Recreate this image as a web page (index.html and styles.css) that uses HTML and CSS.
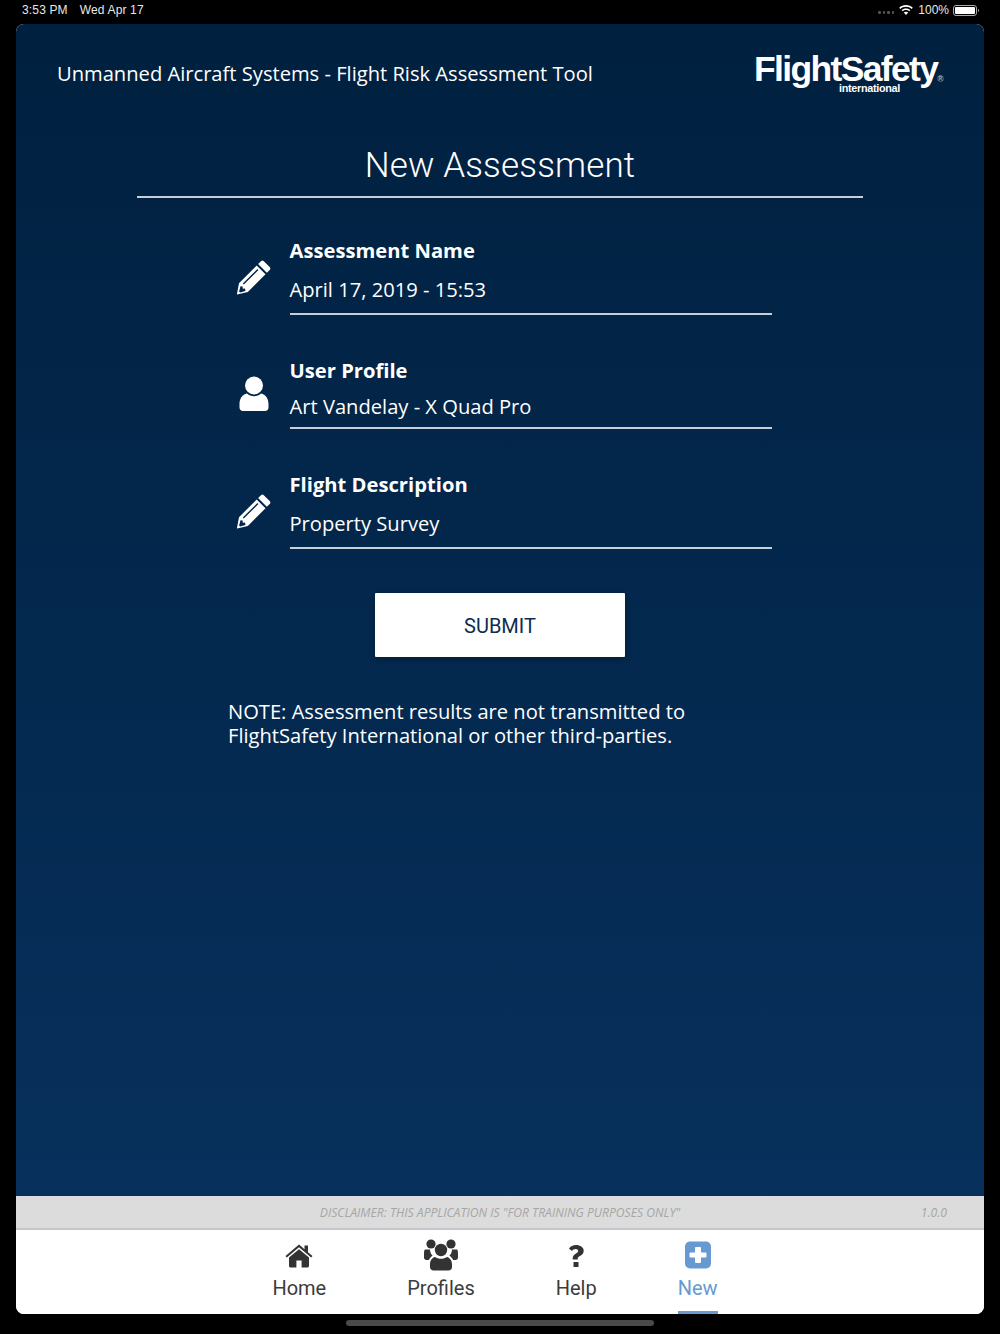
FILE: index.html
```html
<!DOCTYPE html>
<html lang="en">
<head>
<meta charset="utf-8">
<title>New Assessment</title>
<link rel="stylesheet" href="styles.css">
</head>
<body>
<div class="status">
  <div class="status-left"><span>3:53 PM</span><span>Wed Apr 17</span></div>
  <div class="status-right">
    <span class="dots"><i></i><i></i><i></i><i></i></span>
    <svg class="wifi" width="14" height="11" viewBox="0 0 14 11"><path fill="#fff" d="M7 0c2.600 0 5 1 6.800 2.700l-1.100 1.200C11.200 2.500 9.200 1.700 7 1.700S2.800 2.500 1.300 3.900L.2 2.700C2 1 4.400 0 7 0zm0 3.400c1.700 0 3.200.6 4.400 1.700l-1.100 1.200C9.400 5.500 8.300 5 7 5s-2.400.5-3.300 1.300L2.600 5.100C3.800 4 5.300 3.400 7 3.400zm0 3.300c.9 0 1.700.3 2.200.9L7 10 4.800 7.600c.5-.6 1.300-.9 2.200-.9z"/></svg>
    <span>100%</span>
    <span class="battery"><b></b></span>
  </div>
</div>

<main class="card">
  <section class="content">
    <header class="top">
      <h2 class="app-title">Unmanned Aircraft Systems - Flight Risk Assessment Tool</h2>
      <div class="logo">
        <div class="logo-main">FlightSafety<span class="reg">®</span></div>
        <div class="logo-sub">international</div>
      </div>
    </header>
    <h1 class="page-title">New Assessment</h1>
    <form class="form">
      <div class="field f1">
        <svg class="icon" width="36" height="36" viewBox="0 0 36 36"><path fill="#fff" d="M25 2.200a2 2 0 0 1 2.800 0l5.900 5.900a2 2 0 0 1 0 2.800l-2.900 2.900-8.700-8.700zM20.700 6.500 29.500 15.300 11.800 33 1.200 35.600l-.3-.3L3 24.200zM6.800 24.600l1 1L22.400 11l-1-1zM4.500 27.300l-1.400 5.300 1 1 5.300-1.500-.4-2.500-2.200.1-.2-2.300z"/></svg>
        <div class="field-body">
          <div class="label">Assessment Name</div>
          <div class="value">April 17, 2019 - 15:53</div>
        </div>
      </div>
      <div class="field f2">
        <svg class="icon" width="36" height="36" viewBox="0 0 36 36"><circle fill="#fff" cx="18" cy="9.500" r="9"/><path fill="#fff" d="M11 17.500c2 1.800 4.400 2.700 7 2.700s5-.9 7-2.700c4.500 1 7.500 5 7.500 10.500v3.500c0 2-1.500 3.500-3.500 3.500H7c-2 0-3.500-1.500-3.500-3.500V28c0-5.500 3-9.500 7.500-10.500z"/></svg>
        <div class="field-body">
          <div class="label">User Profile</div>
          <div class="value">Art Vandelay - X Quad Pro</div>
        </div>
      </div>
      <div class="field f3">
        <svg class="icon" width="36" height="36" viewBox="0 0 36 36"><path fill="#fff" d="M25 2.200a2 2 0 0 1 2.800 0l5.900 5.900a2 2 0 0 1 0 2.800l-2.900 2.900-8.700-8.700zM20.700 6.500 29.500 15.300 11.800 33 1.200 35.600l-.3-.3L3 24.200zM6.800 24.600l1 1L22.400 11l-1-1zM4.500 27.300l-1.400 5.300 1 1 5.300-1.500-.4-2.500-2.200.1-.2-2.300z"/></svg>
        <div class="field-body">
          <div class="label">Flight Description</div>
          <div class="value">Property Survey</div>
        </div>
      </div>
      <button type="button" class="submit">SUBMIT</button>
      <p class="note">NOTE: Assessment results are not transmitted to<br>FlightSafety International or other third-parties.</p>
    </form>
  </section>

  <div class="disclaimer">
    <span class="disclaimer-text">DISCLAIMER: THIS APPLICATION IS "FOR TRAINING PURPOSES ONLY"</span>
    <span class="version">1.0.0</span>
  </div>

  <nav class="tabs">
    <a class="tab">
      <svg width="28" height="24" viewBox="0 0 28 24"><path fill="#333" d="M14 0.500 0.500 12l1.300 1.500L14 3.300l12.200 10.200 1.300-1.500-4.500-3.800V1.500h-3.500v3.700zM14 5.300 4 13.600V22c0 .8.600 1.400 1.400 1.400h6V16.500h5.200v6.900h6c.8 0 1.400-.6 1.400-1.400v-8.400z"/></svg>
      <span>Home</span>
    </a>
    <a class="tab tab-profiles">
      <svg width="34" height="32" viewBox="0 0 34 32"><circle fill="#333" cx="7" cy="5" r="4.600"/><circle fill="#333" cx="27" cy="5" r="4.600"/><circle fill="#333" cx="17" cy="11" r="6.200"/><path fill="#333" d="M1 10.500h5c.2 2.700 1.100 4.900 2.600 6.300-1.700 1-3 2.600-3.700 4.200H2.500C1 21 0 20 0 18.500v-4c0-1.700.4-4 1-4zM33 10.500h-5c-.2 2.700-1.100 4.900-2.600 6.300 1.700 1 3 2.600 3.700 4.200h2.400c1.500 0 2.500-1 2.500-2.500v-4c0-1.700-.4-4-1-4zM11 18c1.700 1.200 3.800 1.800 6 1.800s4.300-.6 6-1.800c3 .7 5 3.500 5 7.500v2.500c0 2-1.500 3.500-3.500 3.500h-15C7.500 31.500 6 30 6 28v-2.500c0-4 2-6.800 5-7.500z"/></svg>
      <span>Profiles</span>
    </a>
    <a class="tab">
      <svg width="16" height="24" viewBox="0 0 16 24"><path fill="#333" d="M8.200 1C4.900 1 2.500 2.300 1 4.700l3 2.300c.9-1.200 2-1.900 3.700-1.900 1.400 0 2.500.8 2.500 2 0 1.300-1.100 1.900-2.500 2.700-1.700 1-3 2.200-3 4.500v1.200h5v-.9c0-1.100.8-1.700 2.300-2.500 2.200-1.200 3.700-2.700 3.700-5.300C15.700 3.200 12 1 8.200 1zM5.500 18h5v5h-5z"/></svg>
      <span>Help</span>
    </a>
    <a class="tab active tab-new">
      <svg width="26" height="27" viewBox="0 0 26 27"><path fill="#669ad0" fill-rule="evenodd" d="M5 0h16a5 5 0 0 1 5 5v17a5 5 0 0 1-5 5H5a5 5 0 0 1-5-5V5a5 5 0 0 1 5-5zm6 5.500a1 1 0 0 0-1 1V11H5.500a1 1 0 0 0-1 1v3a1 1 0 0 0 1 1H10v4.500a1 1 0 0 0 1 1h4a1 1 0 0 0 1-1V16h4.500a1 1 0 0 0 1-1v-3a1 1 0 0 0-1-1H16V6.500a1 1 0 0 0-1-1z"/></svg>
      <span>New</span>
    </a>
  </nav>
</main>
<div class="home-bar"><i></i></div>
</body>
</html>
```

FILE: styles.css
```css
* { box-sizing: border-box; }
html, body { margin: 0; padding: 0; }
body { width: 1000px; height: 1334px; background: #000; overflow: hidden; font-family: "Open Sans", sans-serif; color: #fff; }

.status { height: 24px; padding: 3px 23px 0 22px; display: flex; justify-content: space-between; font: 12px/14px "Liberation Sans", Arial, sans-serif; color: #e8e8e8; }
.status-left { display: flex; gap: 12px; letter-spacing: .15px; }
.status-right { display: flex; align-items: center; height: 14px; font-size: 12px; }
.dots { display: flex; gap: 2px; margin-right: 5px; margin-top: 5px; }
.dots i { width: 2.500px; height: 2.500px; background: #555; border-radius: 50%; }
.wifi { margin-right: 5px; }
.battery { width: 24px; height: 11px; margin-left: 4px; border: 1px solid #aaa; border-radius: 3px; padding: 1px; position: relative; }
.battery b { display: block; height: 100%; background: #fff; border-radius: 1px; }
.battery::after { content: ""; position: absolute; right: -3px; top: 3px; width: 1.500px; height: 3px; background: #999; border-radius: 0 1px 1px 0; }

.card { width: 968px; height: 1290px; margin: 0 16px; border-radius: 8px; overflow: hidden; display: flex; flex-direction: column; background: #fff; }
.content { height: 1172px; background: linear-gradient(#00203f, #07305c); }

.top { display: flex; justify-content: space-between; padding: 26px 40px 0 41px; height: 118px; }
.app-title { margin: 10px 0 0; font: 400 20.150px/26px "Open Sans", sans-serif; }
.logo { width: 190px; display: flex; flex-direction: column; }
.logo-main { font: 700 35.500px/33px "Liberation Sans", Arial, sans-serif; letter-spacing: -1.650px; white-space: nowrap; height: 30px; margin-top: 3px; }
.reg { font-size: 8.500px; letter-spacing: 0; color: #a9b3bd; vertical-align: -1px; }
.logo-sub { margin: 0 0 0 85px; font: 700 10.800px/10px "Liberation Sans", Arial, sans-serif; letter-spacing: -.3px; }

.page-title { margin: 0 121px; height: 56px; border-bottom: 2px solid rgba(255,255,255,.78); text-align: center; font: 300 35px/48px Roboto, sans-serif; letter-spacing: .15px; }

.form { width: 544px; margin: 0 0 0 212px; display: flex; flex-direction: column; }
.field { display: flex; align-items: flex-start; }
.f1 { margin-top: 38px; }
.f2 { margin-top: 41px; }
.f3 { margin-top: 41px; }
.icon { flex: none; margin: 23px 18px 0 7.500px; }
.f2 .icon { margin-top: 20px; }
.f3 .icon { margin-top: 23px; }
.field-body { width: 482px; margin-left: .5px; border-bottom: 2px solid rgba(255,255,255,.78); }
.label { font: 700 20.200px/28px "Open Sans", sans-serif; margin-left: -.5px; }
.value { font: 400 20.150px/28px "Open Sans", sans-serif; margin-left: -.5px; }
.f1 .value { margin-top: 11px; padding-bottom: 10px; }
.f2 .value { margin-top: 8px; padding-bottom: 7px; }
.f3 .value { margin-top: 11px; padding-bottom: 10px; }

.submit { align-self: center; width: 250px; height: 64px; margin: 44px 0 0 0; border: 0; border-radius: 1px; background: #fff; color: #0c2c52; font: 400 20px/24px Roboto, sans-serif; box-shadow: 0 2px 6px rgba(0,0,0,.3); padding: 2px 0 0; }
.note { margin: 42px 0 0; font: 400 20.150px/24px "Open Sans", sans-serif; white-space: nowrap; }

.disclaimer { height: 34px; background: #dcdcdc; border-bottom: 2px solid #c6c6ca; position: relative; display: flex; justify-content: center; align-items: center; font: italic 400 12.150px/16px "Open Sans", sans-serif; color: #a6a6a6; padding-top: 1px; }
.version { position: absolute; right: 37px; top: 9px; }

.tabs { height: 84px; background: #fff; display: flex; justify-content: center; gap: 81px; padding-right: 10px; }
.tab { display: flex; flex-direction: column; align-items: center; height: 84px; font: 400 20px/24px Roboto, sans-serif; color: #3c3c3c; position: relative; }
.tab svg { flex: none; height: 32px; margin-top: 10px; }
.tab-profiles svg, .tab-new svg { margin-top: 9px; margin-bottom: 1px; }
.tab span { margin-top: 4px; }
.tab.active { color: #669ad0; }
.tab.active::after { content: ""; position: absolute; left: 0; right: 0; bottom: 0; height: 3px; background: #669ad0; }

.home-bar { display: flex; justify-content: center; padding-top: 6px; }
.home-bar i { width: 308px; height: 6px; border-radius: 3px; background: #4a4a4a; }
```
